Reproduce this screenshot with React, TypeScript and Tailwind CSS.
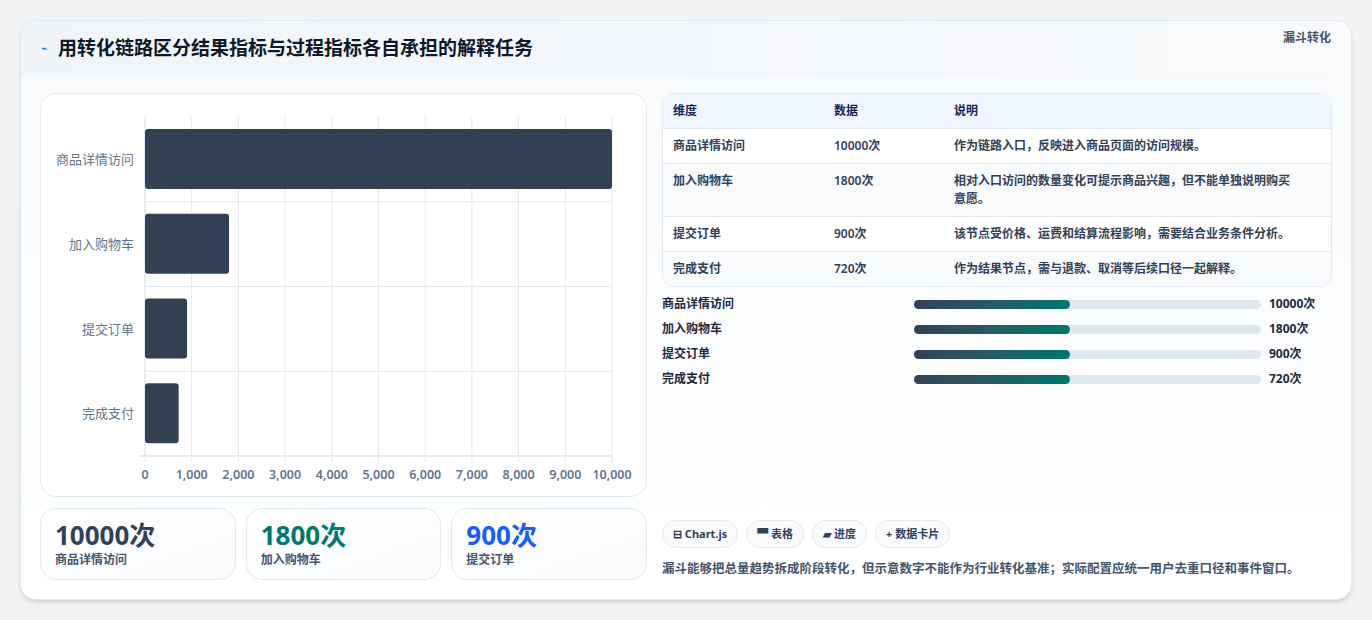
import React from "react";

const font = { fontFamily: '"Noto Sans", "Noto Sans CJK SC", sans-serif' };

const rows = [
  { name: "商品详情访问", value: 10000, desc: "作为链路入口，反映进入商品页面的访问规模。" },
  { name: "加入购物车", value: 1800, desc: "相对入口访问的数量变化可提示商品兴趣，但不能单独说明购买意愿。" },
  { name: "提交订单", value: 900, desc: "该节点受价格、运费和结算流程影响，需要结合业务条件分析。" },
  { name: "完成支付", value: 720, desc: "作为结果节点，需与退款、取消等后续口径一起解释。" },
];

const Chart = () => {
  const x0 = 104, x1 = 571, top = 23, bottom = 362;
  const rowH = (bottom - top) / 4;
  return (
    <svg width="606" height="404" className="block">
      {Array.from({ length: 11 }).map((_, i) => {
        const x = x0 + ((x1 - x0) * i) / 10;
        return (
          <g key={i}>
            <line x1={x} y1={top} x2={x} y2={bottom + 6} stroke="#e2e8f0" />
            <text x={x} y={385} textAnchor="middle" fontSize="12.5" fill="#64748b" fontWeight="600">
              {(i * 1000).toLocaleString("en-US")}
            </text>
          </g>
        );
      })}
      {[1, 2, 3].map((i) => (
        <line key={i} x1={x0} x2={x1} y1={top + rowH * i} y2={top + rowH * i} stroke="#e2e8f0" />
      ))}
      <line x1={x0 - 6} x2={x1} y1={bottom} y2={bottom} stroke="#cbd5e1" />
      <line x1={x0} x2={x0} y1={top} y2={bottom} stroke="#e2e8f0" />
      {rows.map((r, i) => {
        const y = top + rowH * i + 12;
        return (
          <g key={r.name}>
            <rect x={x0} y={y} width={((x1 - x0) * r.value) / 10000} height={60} rx={3} fill="#334155" />
            <text x={x0 - 11} y={y + 35} textAnchor="end" fontSize="13" fill="#64748b">
              {r.name}
            </text>
          </g>
        );
      })}
    </svg>
  );
};

const Stat = ({ v, l, c }: { v: string; l: string; c: string }) => (
  <div className="flex-1 rounded-2xl border border-slate-200 bg-gradient-to-br from-white to-slate-50 px-3.5 py-2.5">
    <div className={`text-[26px] font-bold leading-[32px] ${c}`}>{v}</div>
    <div className="text-[12px] font-semibold text-slate-600">{l}</div>
  </div>
);

const Chip = ({ children }: { children: React.ReactNode }) => (
  <span className="flex h-[28px] items-center rounded-full border border-slate-200 bg-slate-50 px-2.5 text-[11px] font-bold text-slate-700">
    {children}
  </span>
);

export default function App() {
  return (
    <div className="min-h-[620px] bg-gray-100 p-5" style={font}>
      <div className="overflow-hidden rounded-2xl border border-slate-200 bg-white shadow-md">
        <div className="flex h-[55px] items-center justify-between bg-gradient-to-r from-slate-100 to-slate-50 pl-5 pr-5 border-b border-slate-100">
          <div className="flex items-center gap-2.5">
            <span className="text-[11px] text-blue-600">⌁</span>
            <h1 className="text-[19px] font-bold text-slate-900">用转化链路区分结果指标与过程指标各自承担的解释任务</h1>
          </div>
          <span className="-mt-5 text-[12px] font-bold text-slate-600">漏斗转化</span>
        </div>
        <div className="flex gap-[15px] bg-gradient-to-b from-slate-50 to-white px-[19px] pt-[17px] pb-[19px]">
          <div className="flex w-[607px] flex-col gap-[11px]">
            <div className="h-[404px] rounded-2xl border border-slate-200 bg-white">
              <Chart />
            </div>
            <div className="flex gap-[10px]">
              <Stat v="10000次" l="商品详情访问" c="text-slate-700" />
              <Stat v="1800次" l="加入购物车" c="text-teal-700" />
              <Stat v="900次" l="提交订单" c="text-blue-600" />
            </div>
          </div>
          <div className="flex flex-1 flex-col">
            <div className="overflow-hidden rounded-xl border border-slate-200 bg-white text-[12px] text-slate-700">
              <div className="grid grid-cols-[161px_120px_1fr] border-b border-slate-200 bg-blue-50 px-2.5 py-2 font-bold text-blue-950">
                <span>维度</span><span>数据</span><span>说明</span>
              </div>
              {rows.map((r, i) => (
                <div key={r.name} className={`grid grid-cols-[161px_120px_1fr] px-2.5 py-[8px] leading-[18px] ${i < 3 ? "border-b border-slate-200" : ""} ${i % 2 ? "bg-slate-50" : "bg-white"}`}>
                  <span className="font-semibold">{r.name}</span>
                  <span className="font-semibold">{r.value}次</span>
                  <span className="pr-6 font-semibold">{r.desc}</span>
                </div>
              ))}
            </div>
            <div className="mt-2 flex flex-col gap-[7px]">
              {rows.map((r) => (
                <div key={r.name} className="flex h-[18px] items-center text-[12px] font-semibold text-slate-800">
                  <span className="w-[252px]">{r.name}</span>
                  <div className="h-[9px] w-[347px] rounded-full bg-slate-200">
                    <div className="h-full w-[45%] rounded-full bg-gradient-to-r from-slate-700 to-teal-700" />
                  </div>
                  <span className="ml-2 font-bold">{r.value}次</span>
                </div>
              ))}
            </div>
            <div className="mt-auto flex gap-2">
              <Chip>⊟ Chart.js</Chip>
              <Chip>▀ 表格</Chip>
              <Chip>▰ 进度</Chip>
              <Chip>+ 数据卡片</Chip>
            </div>
            <p className="mt-3 mb-[1px] text-[12.5px] font-semibold text-slate-600">
              漏斗能够把总量趋势拆成阶段转化，但示意数字不能作为行业转化基准；实际配置应统一用户去重口径和事件窗口。
            </p>
          </div>
        </div>
      </div>
    </div>
  );
}
